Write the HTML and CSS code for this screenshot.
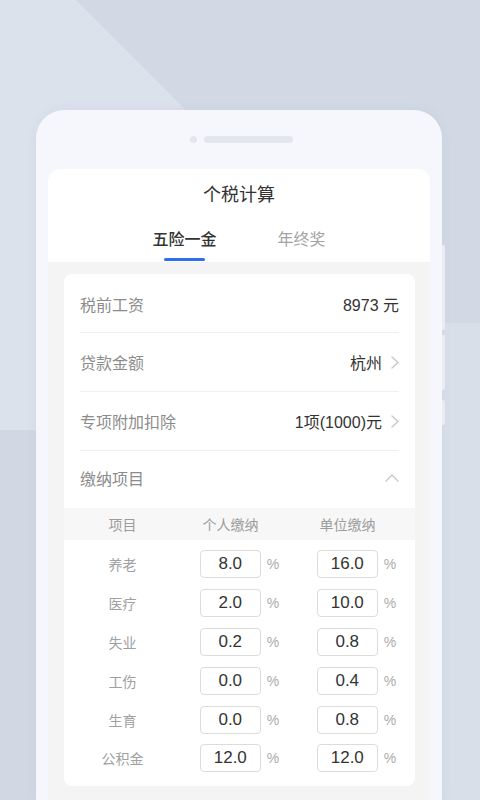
FILE: index.html
```html
<!DOCTYPE html>
<html lang="zh-CN">
<head>
<meta charset="utf-8">
<title>个税计算</title>
<link rel="stylesheet" href="styles.css">
</head>
<body>
<div class="phone">
  <span class="side s1"></span>
  <span class="side s2"></span>
  <span class="side s3"></span>
  <div class="notch"><span class="cam"></span><span class="speaker"></span></div>
  <div class="screen">
    <div class="head">
      <div class="title">个税计算</div>
      <div class="tabs">
        <div class="tab active">五险一金<i class="bar"></i></div>
        <div class="tab">年终奖</div>
      </div>
    </div>
    <div class="body">
      <div class="card">
        <div class="form">
          <div class="row"><span class="label">税前工资</span><span class="value">8973 元</span></div>
          <div class="row"><span class="label">贷款金额</span><span class="value">杭州<svg class="chev" width="8" height="13" viewBox="0 0 8 13"><polyline points="1,1 7,6.5 1,12" fill="none" stroke="#c6c6c6" stroke-width="1.3" stroke-linecap="round" stroke-linejoin="round"/></svg></span></div>
          <div class="row"><span class="label">专项附加扣除</span><span class="value">1项(1000)元<svg class="chev" width="8" height="13" viewBox="0 0 8 13"><polyline points="1,1 7,6.5 1,12" fill="none" stroke="#c6c6c6" stroke-width="1.3" stroke-linecap="round" stroke-linejoin="round"/></svg></span></div>
          <div class="row last"><span class="label">缴纳项目</span><svg class="up" width="14" height="8" viewBox="0 0 14 8"><polyline points="1,7 7,1 13,7" fill="none" stroke="#c6c6c6" stroke-width="1.3" stroke-linecap="round" stroke-linejoin="round"/></svg></div>
        </div>
        <div class="thead"><span>项目</span><span class="h">个人缴纳</span><span class="h">单位缴纳</span></div>
        <div class="tbody">
          <div class="trow"><span class="name">养老</span><span class="cell"><span class="box">8.0</span><span class="pct">%</span></span><span class="cell"><span class="box">16.0</span><span class="pct">%</span></span></div>
          <div class="trow"><span class="name">医疗</span><span class="cell"><span class="box">2.0</span><span class="pct">%</span></span><span class="cell"><span class="box">10.0</span><span class="pct">%</span></span></div>
          <div class="trow"><span class="name">失业</span><span class="cell"><span class="box">0.2</span><span class="pct">%</span></span><span class="cell"><span class="box">0.8</span><span class="pct">%</span></span></div>
          <div class="trow"><span class="name">工伤</span><span class="cell"><span class="box">0.0</span><span class="pct">%</span></span><span class="cell"><span class="box">0.4</span><span class="pct">%</span></span></div>
          <div class="trow"><span class="name">生育</span><span class="cell"><span class="box">0.0</span><span class="pct">%</span></span><span class="cell"><span class="box">0.8</span><span class="pct">%</span></span></div>
          <div class="trow"><span class="name">公积金</span><span class="cell"><span class="box">12.0</span><span class="pct">%</span></span><span class="cell"><span class="box">12.0</span><span class="pct">%</span></span></div>
        </div>
      </div>
    </div>
  </div>
</div>
</body>
</html>
```
FILE: styles.css
```css
* { box-sizing: border-box; }
html, body { margin: 0; padding: 0; }
body {
  width: 480px;
  height: 800px;
  overflow: hidden;
  font-family: "Liberation Sans", "Noto Sans CJK SC", sans-serif;
  background:
    linear-gradient(#d8dfe9, #d8dfe9) 240px 323px / 240px 477px no-repeat,
    linear-gradient(225deg, transparent 44.5%, #dbe2ec 44.5%) 0 0 / 480px 430px no-repeat,
    linear-gradient(#d1d8e4, #d1d8e4) 0 430px / 240px 370px no-repeat,
    #d2d9e5;
}
.phone {
  position: relative;
  margin: 110px 0 0 36px;
  width: 406px;
  height: 690px;
  background: #f5f7fc;
  border-radius: 28px 28px 0 0;
  padding-top: 26px;
  box-shadow: 0 0 10px rgba(150, 160, 185, 0.15);
}
.side {
  position: absolute;
  right: -3px;
  width: 3px;
  background: #e8ecf3;
  border-radius: 0 2px 2px 0;
}
.s1 { top: 135px; height: 85px; }
.s2 { top: 225px; height: 55px; }
.s3 { top: 290px; height: 25px; }
.notch {
  display: flex;
  justify-content: center;
  align-items: center;
  gap: 7px;
  height: 7px;
  padding-left: 5px;
}
.cam { width: 7px; height: 7px; border-radius: 50%; background: #e3e6ed; }
.speaker { width: 89px; height: 7px; border-radius: 4px; background: #e3e6ed; }
.screen {
  margin: 26px 12px 0;
  border-radius: 12px 12px 0 0;
  overflow: hidden;
  background: #f4f4f5;
  height: 640px;
}
.head {
  background: #fff;
  padding: 13px 0 1px;
}
.title {
  text-align: center;
  font-size: 18px;
  line-height: 26px;
  color: #333;
}
.tabs {
  display: flex;
  justify-content: center;
  align-items: flex-start;
  gap: 61px;
  margin-top: 20px;
}
.tab {
  display: flex;
  flex-direction: column;
  align-items: center;
  font-size: 16px;
  line-height: 24px;
  color: #a3a3a3;
}
.tab.active { color: #333; font-weight: 500; }
.bar {
  display: block;
  width: 41px;
  height: 3px;
  margin-top: 6px;
  border-radius: 2px;
  background: #2c6ff0;
}
.body { padding: 12px 15px 0 16px; }
.card {
  background: #fff;
  border-radius: 8px;
  overflow: hidden;
  padding-bottom: 8px;
}
.form { padding: 0 16px 0 16px; }
.row {
  height: 59px;
  display: flex;
  align-items: center;
  justify-content: space-between;
  border-bottom: 1px solid #efefef;
  font-size: 16px;
}
.row:first-child { padding-top: 2px; }
.row.last { border-bottom: 0; height: 57px; padding-bottom: 3px; }
.label { color: #8c8c8c; }
.value { color: #333; display: flex; align-items: center; }
.chev { margin-left: 9px; }
.thead {
  display: grid;
  grid-template-columns: 117px 117px 117px;
  height: 32px;
  align-items: center;
  background: #f7f7f7;
  font-size: 14px;
  color: #9c9c9c;
  text-align: center;
}
.thead .h { padding-right: 18px; }
.tbody { padding-top: 5px; }
.trow {
  display: grid;
  grid-template-columns: 117px 117px 117px;
  height: 38.8px;
  align-items: center;
}
.name { text-align: center; font-size: 14px; color: #a0a0a0; }
.cell {
  display: flex;
  justify-content: center;
  align-items: center;
  gap: 6px;
}
.box {
  width: 61px;
  height: 28px;
  border: 1px solid #dcdcdc;
  border-radius: 4px;
  display: flex;
  align-items: center;
  justify-content: center;
  font-size: 17px;
  color: #333;
}
.pct { font-size: 14px; color: #ababab; }
```
